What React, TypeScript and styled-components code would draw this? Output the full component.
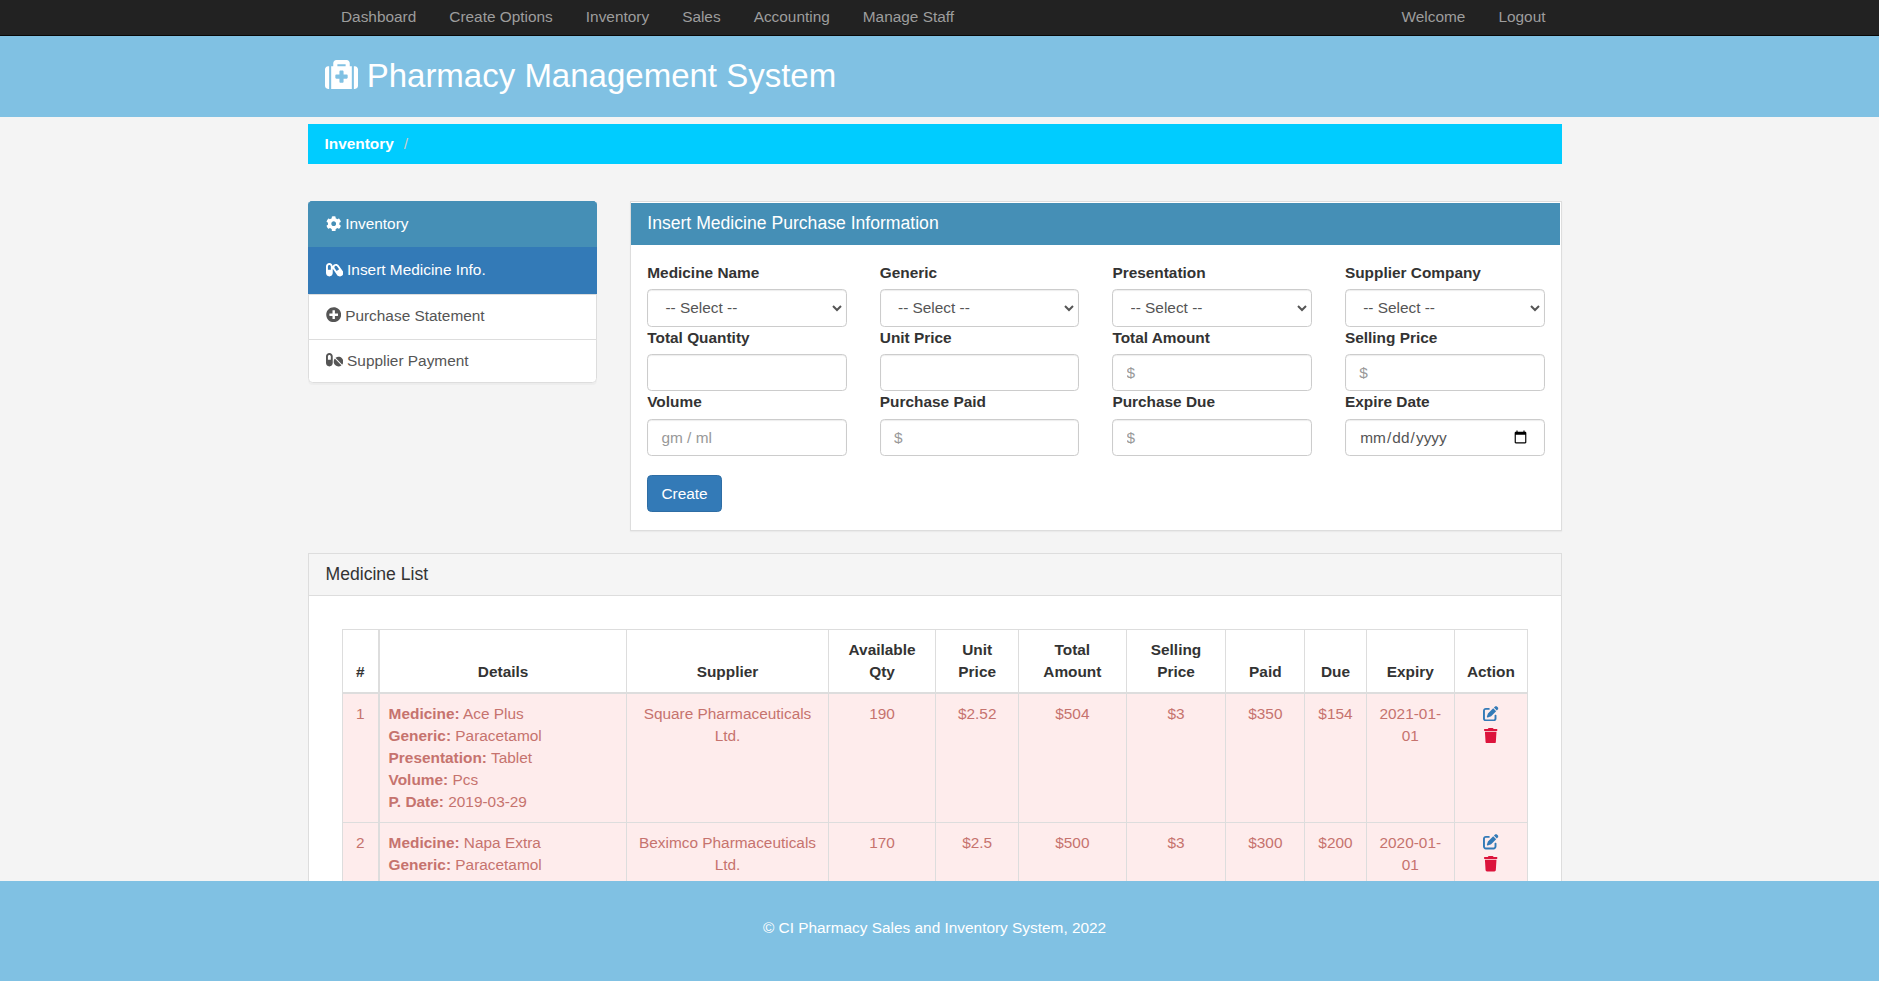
import React from "react";
import styled, { createGlobalStyle } from "styled-components";
import { FaMedkit, FaCog, FaCapsules, FaPlusCircle, FaPills } from "react-icons/fa";
import { FaPenToSquare, FaTrash } from "react-icons/fa6";

const Global = createGlobalStyle`
  html { zoom: 1.1; height: 100%; overflow: hidden; }
  body {
    margin: 0; height: 100%; overflow: hidden; background: #f4f4f4; color: #333;
    font-family: "Liberation Sans", Arial, sans-serif; font-size: 14px; line-height: 1.42857;
  }
  * { box-sizing: border-box; }
  svg { vertical-align: -0.125em; }
`;

const Page = styled.div``;
const Container = styled.div`
  width: 1170px;
  margin-left: 265px;
  padding: 0 15px;
`;
const Navbar = styled.nav`
  background: #222;
  border-bottom: 1px solid #080808;
  height: 33px;
`;
const NavInner = styled(Container)`
  display: flex;
  justify-content: space-between;
`;
const NavGroup = styled.div`
  display: flex;
`;
const NavLink = styled.a`
  padding: 5px 15px;
  color: #9d9d9d;
`;
const NavLeft = styled(NavGroup)`
  margin-left: 15px;
`;
const Banner = styled.header`
  background: #80c1e3;
  height: 73.6px;
`;
const BannerInner = styled(Container)`
  height: 100%;
  display: flex;
  align-items: center;
  padding-left: 30px;
  padding-bottom: 1px;
`;
const Title = styled.h2`
  margin: 0;
  font-size: 30px;
  font-weight: 500;
  line-height: 1.1;
  color: #fff;
`;
const Breadcrumb = styled.div`
  margin-top: 6.4px;
  height: 36px;
  padding: 8px 15px;
  background: #00ccff;
  display: flex;
  gap: 9px;
`;
const Crumb = styled.a`
  font-weight: bold;
  color: #fff;
`;
const Slash = styled.span`
  color: #ccc;
`;
const Columns = styled.div`
  margin-top: 34px;
  display: grid;
  grid-template-columns: 262.5px 847.5px;
  gap: 30px;
  align-items: start;
`;
const SideList = styled.div`
  display: flex;
  flex-direction: column;
  border-radius: 4px;
  overflow: hidden;
  box-shadow: 0 1px 1px rgba(0, 0, 0, 0.03);
`;
const SideItem = styled.a<{ $kind?: "head" | "active" }>`
  display: block;
  padding: ${(p) => (p.$kind ? "10px 15px" : "9px 15px")};
  margin-bottom: ${(p) => (p.$kind ? "0" : "-1px")};
  height: 42px;
  border: 1px solid ${(p) => (p.$kind === "head" ? "#458fb6" : p.$kind === "active" ? "#337ab7" : "#ddd")};
  background: ${(p) => (p.$kind === "head" ? "#458fb6" : p.$kind === "active" ? "#337ab7" : "#fff")};
  color: ${(p) => (p.$kind ? "#fff" : "#555")};
  &:last-child { margin-bottom: 0; height: 40px; border-radius: 0 0 4px 4px; }
`;
const Capsules = styled(FaCapsules)`
  width: 1.125em;
`;
const Pills = styled(FaPills)`
  width: 1.125em;
`;
const FormPanel = styled.section`
  background: #fff;
  border: 1px solid #ddd;
  padding-top: 1px;
  box-shadow: 0 1px 1px rgba(0, 0, 0, 0.05);
`;
const FormHeading = styled.h3`
  margin: 0 1px 0 0;
  padding: 10px 15px;
  height: 38px;
  background: #458fb6;
  color: #fff;
  font-size: 16px;
  font-weight: 500;
  line-height: 1.1;
`;
const FormBody = styled.div`
  padding: 15px 15px 16px;
`;
const FormGrid = styled.div`
  display: grid;
  grid-template-columns: repeat(4, 1fr);
  column-gap: 30px;
  margin-bottom: 17px;
`;
const Field = styled.div``;
const Label = styled.label`
  display: block;
  font-weight: bold;
  margin-bottom: 5px;
`;
const Control = `
  display: block;
  width: 100%;
  height: 34px;
  padding: 6px 12px;
  background: #fff;
  border: 1px solid #ccc;
  border-radius: 4px;
  color: #555;
  font-family: inherit;
  font-size: 14px;
  line-height: 1.42857;
  box-shadow: inset 0 1px 1px rgba(0, 0, 0, 0.075);
  &::placeholder { color: #999; }
`;
const Select = styled.select`
  ${Control}
`;
const Input = styled.input`
  ${Control}
`;
const Button = styled.button`
  display: block;
  height: 34px;
  padding: 6px 12px;
  background: #337ab7;
  border: 1px solid #2e6da4;
  border-radius: 4px;
  color: #fff;
  font-family: inherit;
  font-size: 14px;
`;
const ListPanel = styled.section`
  margin-top: 20px;
  background: #fff;
  border: 1px solid #ddd;
`;
const ListHeading = styled.h3`
  margin: 0;
  padding: 10px 15px;
  height: 38px;
  background: #f5f5f5;
  border-bottom: 1px solid #ddd;
  color: #333;
  font-size: 16px;
  font-weight: 500;
  line-height: 1.1;
`;
const ListBody = styled.div`
  padding: 30px;
`;
const Table = styled.table`
  width: 1077px;
  table-layout: fixed;
  border-collapse: collapse;
`;
const Th = styled.th`
  padding: 8.4px 8px;
  border: 1px solid #ddd;
  border-bottom: 2px solid #ddd;
  vertical-align: bottom;
  text-align: center;
  font-weight: bold;
  &:first-child { border-right-width: 2px; }
`;
const Row = styled.tr`
  background: #feecec;
`;
const Td = styled.td<{ $left?: boolean }>`
  padding: 8px;
  border: 1px solid #ddd;
  vertical-align: top;
  text-align: ${(p) => (p.$left ? "left" : "center")};
  color: #c6736e;
  &:first-child { border-right-width: 2px; }
`;
const DetailLine = styled.div``;
const IconLine = styled.div<{ $color: string }>`
  color: ${(p) => p.$color};
`;
const Footer = styled.footer`
  position: fixed;
  left: 0;
  right: 0;
  bottom: 0;
  height: 90.7px;
  padding: 0 9px 6px 0;
  background: #80c1e3;
  color: #fff;
  display: flex;
  align-items: center;
  justify-content: center;
`;

const fields: { label: string; kind: "select" | "input" | "date"; placeholder?: string }[] = [
  { label: "Medicine Name", kind: "select" },
  { label: "Generic", kind: "select" },
  { label: "Presentation", kind: "select" },
  { label: "Supplier Company", kind: "select" },
  { label: "Total Quantity", kind: "input" },
  { label: "Unit Price", kind: "input" },
  { label: "Total Amount", kind: "input", placeholder: "$" },
  { label: "Selling Price", kind: "input", placeholder: "$" },
  { label: "Volume", kind: "input", placeholder: "gm / ml" },
  { label: "Purchase Paid", kind: "input", placeholder: "$" },
  { label: "Purchase Due", kind: "input", placeholder: "$" },
  { label: "Expire Date", kind: "date" },
];

const colWidths = [33, 225.5, 183, 98, 75, 98, 90.5, 72, 55.5, 80.5, 66];
const heads: React.ReactNode[] = [
  "#", "Details", "Supplier", "Available Qty", "Unit Price", "Total Amount", "Selling Price",
  "Paid", "Due", "Expiry", "Action",
];

const rows = [
  {
    n: 1, med: "Ace Plus", generic: "Paracetamol", pres: "Tablet", vol: "Pcs", date: "2019-03-29",
    sup: "Square Pharmaceuticals Ltd.", qty: 190, unit: "$2.52", total: "$504", sell: "$3", paid: "$350", due: "$154", exp: "2021-01-01",
  },
  {
    n: 2, med: "Napa Extra", generic: "Paracetamol", pres: "Tablet", vol: "Pcs", date: "2019-03-29",
    sup: "Beximco Pharmaceuticals Ltd.", qty: 170, unit: "$2.5", total: "$500", sell: "$3", paid: "$300", due: "$200", exp: "2020-01-01",
  },
];

export default function App() {
  return (
    <Page>
      <Global />
      <Navbar>
        <NavInner>
          <NavLeft>
            {["Dashboard", "Create Options", "Inventory", "Sales", "Accounting", "Manage Staff"].map((t) => (
              <NavLink key={t}>{t}</NavLink>
            ))}
          </NavLeft>
          <NavGroup>
            <NavLink>Welcome</NavLink>
            <NavLink>Logout</NavLink>
          </NavGroup>
        </NavInner>
      </Navbar>
      <Banner>
        <BannerInner>
          <Title><FaMedkit /> Pharmacy Management System</Title>
        </BannerInner>
      </Banner>
      <Container>
        <Breadcrumb>
          <Crumb>Inventory</Crumb>
          <Slash>/</Slash>
        </Breadcrumb>
        <Columns>
          <SideList>
            <SideItem $kind="head"><FaCog /> Inventory</SideItem>
            <SideItem $kind="active"><Capsules /> Insert Medicine Info.</SideItem>
            <SideItem><FaPlusCircle /> Purchase Statement</SideItem>
            <SideItem><Pills /> Supplier Payment</SideItem>
          </SideList>
          <FormPanel>
            <FormHeading>Insert Medicine Purchase Information</FormHeading>
            <FormBody>
              <FormGrid>
                {fields.map((f) => (
                  <Field key={f.label}>
                    <Label>{f.label}</Label>
                    {f.kind === "select" ? (
                      <Select defaultValue=""><option value="">-- Select --</option></Select>
                    ) : f.kind === "date" ? (
                      <Input type="date" />
                    ) : (
                      <Input type="text" placeholder={f.placeholder} />
                    )}
                  </Field>
                ))}
              </FormGrid>
              <Button>Create</Button>
            </FormBody>
          </FormPanel>
        </Columns>
        <ListPanel>
          <ListHeading>Medicine List</ListHeading>
          <ListBody>
            <Table>
              <colgroup>
                {colWidths.map((w, i) => <col key={i} width={w} />)}
              </colgroup>
              <thead>
                <tr>{heads.map((h, i) => <Th key={i}>{h}</Th>)}</tr>
              </thead>
              <tbody>
                {rows.map((r) => (
                  <Row key={r.n}>
                    <Td>{r.n}</Td>
                    <Td $left>
                      <DetailLine><b>Medicine:</b> {r.med}</DetailLine>
                      <DetailLine><b>Generic:</b> {r.generic}</DetailLine>
                      <DetailLine><b>Presentation:</b> {r.pres}</DetailLine>
                      <DetailLine><b>Volume:</b> {r.vol}</DetailLine>
                      <DetailLine><b>P. Date:</b> {r.date}</DetailLine>
                    </Td>
                    <Td>{r.sup}</Td>
                    <Td>{r.qty}</Td>
                    <Td>{r.unit}</Td>
                    <Td>{r.total}</Td>
                    <Td>{r.sell}</Td>
                    <Td>{r.paid}</Td>
                    <Td>{r.due}</Td>
                    <Td>{r.exp}</Td>
                    <Td>
                      <IconLine $color="#337ab7"><FaPenToSquare /></IconLine>
                      <IconLine $color="#dc143c"><FaTrash /></IconLine>
                    </Td>
                  </Row>
                ))}
              </tbody>
            </Table>
          </ListBody>
        </ListPanel>
      </Container>
      <Footer>© CI Pharmacy Sales and Inventory System, 2022</Footer>
    </Page>
  );
}
